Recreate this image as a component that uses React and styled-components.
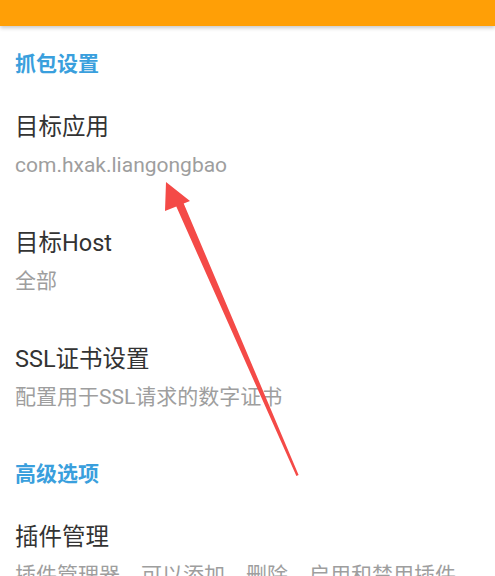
import React from "react";
import styled, { createGlobalStyle } from "styled-components";

const GlobalStyle = createGlobalStyle`
  html, body { margin: 0; padding: 0; background: #ffffff; }
  body {
    font-family: Roboto, "Noto Sans CJK SC", "Noto Sans", sans-serif;
    overflow: hidden;
  }
`;

const Screen = styled.div`
  position: relative;
  width: 495px;
  height: 576px;
  overflow: hidden;
  background: #ffffff;
  display: flex;
  flex-direction: column;
`;

const Toolbar = styled.div`
  flex: none;
  height: 26px;
  background: #ff9f06;
  box-shadow: 0 2px 4px rgba(0, 0, 0, 0.22);
  position: relative;
  z-index: 1;
`;

const SectionHeader = styled.div`
  padding: 26px 15px 12px;
  font-size: 21px;
  line-height: 24px;
  font-weight: 700;
  color: #3a9fdd;
`;

const Item = styled.div`
  padding: 22px 15px;
  display: flex;
  flex-direction: column;
  gap: 4px;
`;

const Title = styled.div`
  font-size: 23.5px;
  line-height: 34px;
  color: #333333;
  white-space: nowrap;
`;

const Summary = styled.div`
  font-size: 21px;
  line-height: 34px;
  color: #9e9e9e;
  white-space: nowrap;
`;

const Annotation = styled.svg`
  position: absolute;
  left: 0;
  top: 0;
  pointer-events: none;
`;

const sections = [
  {
    title: "抓包设置",
    items: [
      { title: "目标应用", summary: "com.hxak.liangongbao" },
      { title: "目标Host", summary: "全部" },
      { title: "SSL证书设置", summary: "配置用于SSL请求的数字证书" },
    ],
  },
  {
    title: "高级选项",
    items: [
      { title: "插件管理", summary: "插件管理器，可以添加、删除、启用和禁用插件" },
    ],
  },
];

export default function App() {
  return (
    <>
      <GlobalStyle />
      <Screen>
        <Toolbar />
        {sections.map((s) => (
          <React.Fragment key={s.title}>
            <SectionHeader>{s.title}</SectionHeader>
            {s.items.map((it) => (
              <Item key={it.title}>
                <Title>{it.title}</Title>
                <Summary>{it.summary}</Summary>
              </Item>
            ))}
          </React.Fragment>
        ))}
        <Annotation width="495" height="576" viewBox="0 0 495 576">
          <polygon
            points="166,182 165,211 176.3,206.6 296.4,476 298.6,475 183.7,203.4 190,201"
            fill="#f44a47"
          />
        </Annotation>
      </Screen>
    </>
  );
}
